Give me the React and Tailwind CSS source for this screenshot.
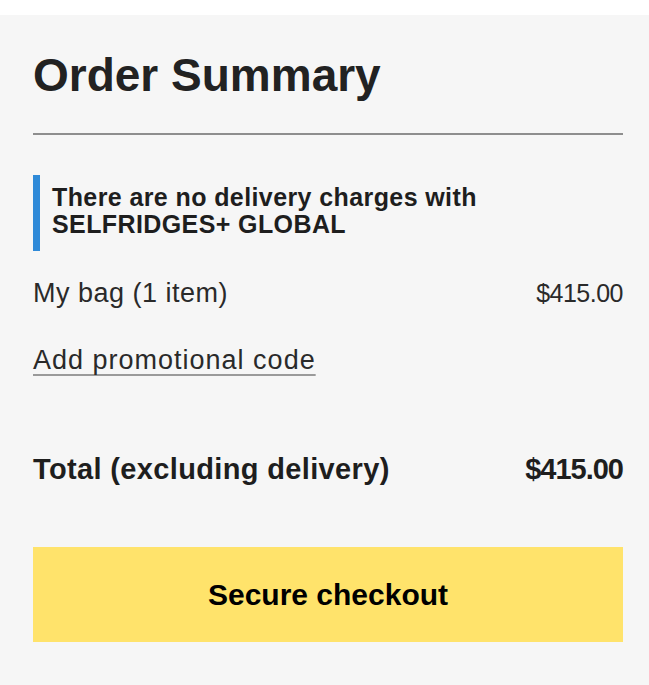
import React from 'react';

/**
 * Order summary panel
 * bag total, promo link and checkout button
 */
const SummaryRow = ({ label, value, className = '', valueClassName = '' }) => (
  <div className={`flex items-start justify-between ${className}`}>
    <span>{label}</span>
    <span className={valueClassName}>{value}</span>
  </div>
);

const App = () => {
  const itemCount = 1;
  const subtotal  = '$415.00';

  return (
    <div className="min-h-screen bg-white pt-[15px] font-['Liberation_Sans',Arial,sans-serif]">
      <div className="min-h-[670px] bg-[#f6f6f6] pt-[37px] pb-[43px] pl-[33px] pr-[26px] text-[#222]">

        {/* Header */}
        <h2 className="text-[46px] leading-[46px] font-bold">
          Order Summary
        </h2>
        <div className="mt-[35px] h-[2px] bg-[#8e8e8e]" />

        {/* Delivery notice */}
        <div className="mt-[40px] border-l-[7px] border-[#2f8ad8] pl-[12px] pt-[9px] pb-[13px]">
          <p className="text-[25px] leading-[27px] font-bold tracking-[0.4px] text-[#1e1e1e]">
            There are no delivery charges with
            <br />
            SELFRIDGES+ GLOBAL
          </p>
        </div>

        {/* Bag */}
        <SummaryRow
          label={`My bag (${itemCount} item)`}
          value={subtotal}
          className="mt-[26px] text-[27px] leading-[32px] tracking-[0.5px] text-[#2a2a2a]"
          valueClassName="text-[25px] tracking-[-0.5px]"
        />

        <a
          href="#"
          className="mt-[35px] block w-fit text-[27px] leading-[32px] tracking-[1px] text-[#2a2a2a]
                     underline decoration-[#9a9a9a] decoration-2 underline-offset-[5px]
                     [text-decoration-skip-ink:none]"
        >
          Add promotional code
        </a>

        {/* Total */}
        <SummaryRow
          label="Total (excluding delivery)"
          value={subtotal}
          className="mt-[75px] text-[29px] leading-[36px] font-bold tracking-[0.35px] text-[#1e1e1e]"
          valueClassName="tracking-[-1px]"
        />

        {/* Checkout */}
        <button
          className="mt-[60px] flex h-[95px] w-full items-center justify-center
                     bg-[#ffe36b] text-[30px] leading-[36px] font-bold text-black"
        >
          Secure checkout
        </button>
      </div>
    </div>
  );
};

export default App;
